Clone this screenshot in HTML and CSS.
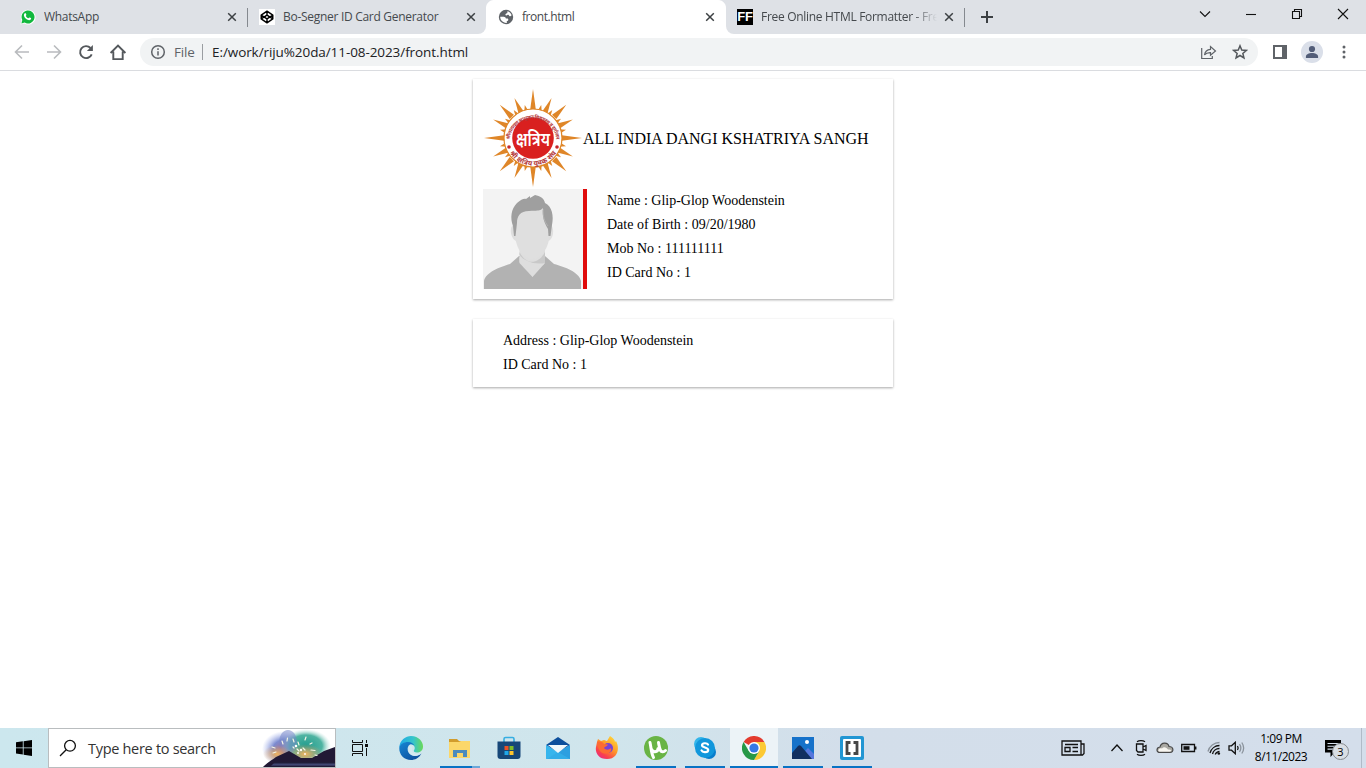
FILE: index.html
```html
<!DOCTYPE html>
<html lang="en">
<head>
<meta charset="utf-8">
<title>front.html</title>
<link rel="stylesheet" href="styles.css">
</head>
<body>
<div class="desktop">
  <header class="tabstrip">
    <div class="tab tab-first">
      <svg class="favicon" viewBox="0 0 16 16"><path d="M.4 15.500l1.200-4A7.400 7.400 0 1 1 4.400 14.500z" fill="#fff"/><path d="M1.400 14.400l.9-3.300A6.500 6.500 0 1 1 4.700 13.600z" fill="#12b83e"/><path d="M4.600 4.500c.5-.6 1-.5 1.300.2l.5 1.100c.1.400-.4.800-.6 1.100.6 1.200 1.500 1.900 2.700 2.400.4-.3.700-1 1.100-.9l1.400.7c.3.300 0 1.300-.5 1.700-1.200.9-2.900.2-4.200-.8C5 9 3.800 7.400 3.900 6c0-.6.300-1.100.7-1.500z" fill="#fff"/></svg>
      <span class="tab-title t-whatsapp">WhatsApp</span>
      <svg class="close" viewBox="0 0 10 10"><path d="M1.200 1.200l7.600 7.600M8.800 1.200l-7.600 7.600"/></svg>
    </div>
    <div class="tab tab-second">
      <svg class="favicon" viewBox="0 0 16 16"><rect width="16" height="16" fill="#fff"/><path d="M8 2.200l5.800 3.900v3.800L8 13.800 2.200 9.900V6.100zM8 2.200v3.900M8 9.900v3.900M2.200 6.100L8 9.900l5.800-3.800M2.200 9.900L8 6.100l5.800 3.800" fill="none" stroke="#000" stroke-width="1.400" stroke-linejoin="round"/></svg>
      <span class="tab-title t-segner">Bo-Segner ID Card Generator</span>
      <svg class="close" viewBox="0 0 10 10"><path d="M1.200 1.200l7.600 7.600M8.800 1.200l-7.600 7.600"/></svg>
    </div>
    <div class="tab tab-active">
      <svg class="favicon" viewBox="0 0 16 16"><circle cx="8" cy="8" r="7.200" fill="#5f6368"/><path d="M9.500 2.300c2 .5 3.600 1.900 4.100 4-.8 1.300-1.700 1.100-2.300.6-.5-.4-.2-1-1-1.100-.9 0-1.200.8-2.100.7-.8-.1-1-.9-.5-1.500.6-.6 1.300-.3 1.600-.9.200-.5-.2-1.100.2-1.800zM2.200 7.700h3.500c1.300 0 2.200.8 2.200 1.900h1.200c.8 0 1.200.5 1.200 1.100 0 .8-.7 1.200-1.500 1.300v1.900C5.200 14.200 2.100 11.400 2.200 7.700z" fill="#fff"/></svg>
      <span class="tab-title t-front">front.html</span>
      <svg class="close" viewBox="0 0 10 10"><path d="M1.200 1.200l7.600 7.600M8.800 1.200l-7.600 7.600"/></svg>
    </div>
    <div class="tab tab-last">
      <span class="favicon ff">FF</span>
      <span class="tab-title t-format">Free Online HTML Formatter - Fre</span>
      <svg class="close" viewBox="0 0 10 10"><path d="M1.200 1.200l7.600 7.600M8.800 1.200l-7.600 7.600"/></svg>
    </div>
    <svg class="newtab" viewBox="0 0 12 12"><path d="M6 0v12M0 6h12"/></svg>
    <div class="window-buttons">
      <svg viewBox="0 0 12 12"><path d="M1 3.500l5 5 5-5" /></svg>
      <svg viewBox="0 0 12 12"><path d="M1 6.500h10"/></svg>
      <svg viewBox="0 0 12 12"><path d="M1.500 3.500h7v7h-7zM3.500 3.500v-2h7v7h-2"/></svg>
      <svg viewBox="0 0 12 12"><path d="M1 1l10 10M11 1L1 11"/></svg>
    </div>
  </header>

  <nav class="toolbar">
    <div class="nav-buttons">
      <svg class="dim" viewBox="0 0 18 18"><path d="M16 9H2.500M9 2.500L2.500 9 9 15.500"/></svg>
      <svg class="dim" viewBox="0 0 18 18"><path d="M2 9h13.500M9 2.500L15.500 9 9 15.500"/></svg>
      <svg viewBox="0 0 18 18"><path d="M14.700 11.300A6 6 0 1 1 13.500 5" /><path d="M15.900 2v6h-6z" class="solid"/></svg>
      <svg viewBox="0 0 18 18"><path d="M1.600 10L9 2.500l7.400 7.500M4.300 8.500v7.600h9.400V8.500"/></svg>
    </div>
    <div class="omnibox">
      <svg class="info" viewBox="0 0 16 16"><circle cx="8" cy="8" r="6.300"/><path d="M8 7.200v4.200M8 4.300v1.700"/></svg>
      <span class="scheme">File</span>
      <span class="url">E:/work/riju%20da/11-08-2023/front.html</span>
      <svg class="share" viewBox="0 0 18 16"><path d="M1.700 4v10.500h10.600V12M4.500 11C5 7.500 7 5.500 10.500 5.300V2.500L15.500 7l-5 4.300V8.600C8 8.500 6 9 4.500 11z"/></svg>
      <svg class="star" viewBox="0 0 16 16"><path d="M8 1.800l1.750 4.250 4.600.35-3.500 3 1.100 4.500L8 11.500l-3.950 2.400 1.100-4.500-3.500-3 4.600-.35z"/></svg>
    </div>
    <svg class="panel" viewBox="0 0 14 14"><path d="M1 1h12v12H1z" fill="#fff" stroke="#5f6368" stroke-width="2"/><path d="M9 1h4v12H9z" fill="#5f6368"/></svg>
    <svg class="avatar" viewBox="0 0 22 22"><circle cx="11" cy="11" r="11" fill="#dadfe9"/><circle cx="11" cy="8" r="3.100" fill="#525d78"/><path d="M4.900 17v-1.300c0-2.200 3-3.600 6.100-3.600s6.100 1.400 6.100 3.600V17z" fill="#525d78"/></svg>
    <svg class="dots" viewBox="0 0 4 14"><circle cx="2" cy="2" r="1.500"/><circle cx="2" cy="7" r="1.500"/><circle cx="2" cy="12" r="1.500"/></svg>
  </nav>

  <main class="page">
    <section class="card">
      <div class="card-head">
        <svg class="logo" viewBox="0 1 100 100">
          <defs>
            <path id="ray" d="M50 1L53 23h-6z"/>
            <path id="ray-mid" d="M50 6L53 23h-6z"/>
            <path id="ray-short" d="M50 16L52.300 23h-4.600z"/>
            <g id="quarter">
              <use href="#ray"/>
              <use href="#ray-short" transform="rotate(14 50 50)"/>
              <use href="#ray-mid" transform="rotate(25 50 50)"/>
              <use href="#ray-short" transform="rotate(34.500 50 50)"/>
              <use href="#ray-mid" transform="rotate(45 50 50) translate(0 -3)"/>
              <use href="#ray-short" transform="rotate(55.500 50 50)"/>
              <use href="#ray-mid" transform="rotate(65 50 50)"/>
              <use href="#ray-short" transform="rotate(76 50 50)"/>
            </g>
            <path id="arc-top" d="M26.700 52A23.400 23.400 0 0 1 73.300 52"/>
            <path id="arc-bottom" d="M22.500 55A28 28 0 0 0 77.500 55"/>
          </defs>
          <g fill="#df8628">
            <use href="#quarter"/><use href="#quarter" transform="rotate(90 50 50)"/>
            <use href="#quarter" transform="rotate(180 50 50)"/><use href="#quarter" transform="rotate(270 50 50)"/>
          </g>
          <circle cx="50" cy="50" r="29" fill="#fff" stroke="#df8628" stroke-width="1.200"/>
          <circle cx="50" cy="50" r="20.800" fill="#d9201f"/>
          <circle cx="26" cy="59" r="1.800" fill="#c5262a"/><circle cx="74" cy="59" r="1.800" fill="#c5262a"/>
          <text class="ring-text"><textPath href="#arc-top" textLength="68">श्रीनारायण साधुजन विद्यालय व दुर्गाजन</textPath></text>
          <text class="ring-text ring-bottom"><textPath href="#arc-bottom" startOffset="11" textLength="55">श्री क्षत्रिय युवक संघ</textPath></text>
          <g transform="translate(50 57.500) scale(1 1.300)"><text class="logo-word" text-anchor="middle" textLength="34" lengthAdjust="spacingAndGlyphs">क्षत्रिय</text></g>
        </svg>
        <span class="org">ALL INDIA DANGI KSHATRIYA SANGH</span>
      </div>
      <div class="card-body">
        <svg class="photo" viewBox="0 0 100 100">
          <rect width="100" height="100" fill="#f3f3f3"/>
          <path d="M1 100V92C3 83 17 78 27 75L36 67H62L71 75C82 78 96 83 98 92V100z" fill="#b2b2b2"/>
          <path d="M36.500 56V74L49.500 88 62 74V56z" fill="#dedede"/>
          <path d="M36.500 63C43 76 55 76 62 63V74C51 76 41 72 36.500 66z" fill="#c9c9c9"/>
          <path d="M36.500 73C41 79 47 78 49.500 88 51 79 59 78 62 74L61 75C52 76 44 74 36.500 68z" fill="#dedede"/>
          <path d="M31 36C26 36 27 51 34 52zM67 36C72 37 71 51 65 52z" fill="#dedede"/>
          <path d="M32 24C36 17 62 16 66 27L66.500 48C65 58 60 69 49 70 38 69 33 57 32 47z" fill="#dfdfdf"/>
          <path d="M31 47L30 37C27 29 28 20 34 14 38 10 42 9 43 10L47 7 47 9 52 6C57 7 61 9 62 14 69 17 71 27 69 36L67.500 47H65.500L65 40C61 33 59 28 60 19 57 23 52 21 46 22 37 22 34 27 34 34L32.500 47z" fill="#9f9f9f"/>
          <path d="M60 20C60 27 61 32 65 37" fill="none" stroke="#b8b8b8" stroke-width=".8"/>
        </svg>
        <div class="details front">
          <div>Name : Glip-Glop Woodenstein</div>
          <div>Date of Birth : 09/20/1980</div>
          <div>Mob No : 111111111</div>
          <div>ID Card No : 1</div>
        </div>
      </div>
    </section>
    <section class="card">
      <div class="details">
        <div>Address : Glip-Glop Woodenstein</div>
        <div>ID Card No : 1</div>
      </div>
    </section>
  </main>

  <footer class="taskbar">
    <div class="start"><svg viewBox="0 0 16 16"><path d="M0 2.300l6.800-1v6.200H0zM7.600 1.200L16 0v7.500H7.600zM0 8.300h6.800v6.300L0 13.600zM7.600 8.300H16V16l-8.400-1.200z"/></svg></div>
    <div class="search">
      <svg class="lens" viewBox="0 0 18 18"><circle cx="11" cy="6.800" r="5.400"/><path d="M7.200 10.800L1 17"/></svg>
      <span>Type here to search</span>
      <svg class="fireworks" viewBox="0 0 73 38">
        <defs>
          <radialGradient id="sky1"><stop offset="0" stop-color="#a76d93"/><stop offset=".5" stop-color="#7b8bd0"/><stop offset="1" stop-color="#aab8f0" stop-opacity="0"/></radialGradient>
          <radialGradient id="sky2"><stop offset="0" stop-color="#239d8f"/><stop offset=".65" stop-color="#4fb4a2"/><stop offset="1" stop-color="#bfe5df" stop-opacity="0"/></radialGradient>
          <radialGradient id="glow"><stop offset="0" stop-color="#f2b45d"/><stop offset="1" stop-color="#d89a60" stop-opacity="0"/></radialGradient>
          <linearGradient id="lake" x2="0" y2="1"><stop offset="0" stop-color="#17132a"/><stop offset=".55" stop-color="#454b7a"/><stop offset="1" stop-color="#130e25"/></linearGradient>
        </defs>
        <ellipse cx="22" cy="20" rx="22" ry="18" fill="url(#sky1)"/>
        <ellipse cx="44" cy="17" rx="25" ry="17" fill="url(#sky2)"/>
        <ellipse cx="26" cy="13" rx="9" ry="12" fill="#7687c8" opacity=".55"/>
        <ellipse cx="15" cy="25" rx="14" ry="9" fill="url(#glow)"/>
        <ellipse cx="43" cy="25" rx="18" ry="10" fill="url(#glow)"/>
        <path d="M1 38C6 33 10 31 14 28L27 22 39 29 50 29 62 22 73 18V38z" fill="#211935"/>
        <path d="M13 33H73V38H8z" fill="url(#lake)"/>
        <path d="M21 15l-1-3M13 19l-3-1M14 23l-3 1M25 12l.5-3M32 13l-1-3M37 16l-1-3M43 11l1-3M48 15l2-1M49 21l4 .5M31 18l1 1M35 20l2 2M41 19l2 2M53 26l2 .5" stroke="#f4f4e5" stroke-width="1.200" stroke-linecap="round"/>
        <circle cx="34" cy="17" r="1.300" fill="#fff"/><circle cx="39" cy="21" r="1.200" fill="#fff"/><circle cx="36" cy="24" r=".9" fill="#fff"/><circle cx="43" cy="25" r=".9" fill="#fff"/>
      </svg>
    </div>
    <div class="taskview"><svg viewBox="0 0 17 16"><path d="M.5 0v2.500h10V0M.5 16v-2.500h10V16M.5 4.500h10v7H.5zM14.500 0v3M14.500 8v8"/><path class="knob" d="M13 4h3v3h-3z"/></svg></div>
    <div class="apps">
      <div class="app"><svg viewBox="0 0 24 24"><defs><linearGradient id="edge-a" x1="0" x2="1"><stop offset="0" stop-color="#1fa9e6"/><stop offset=".6" stop-color="#36c5c9"/><stop offset="1" stop-color="#6bd957"/></linearGradient><linearGradient id="edge-b" x2=".8" y2="1"><stop stop-color="#1686d4"/><stop offset="1" stop-color="#0d4d9b"/></linearGradient></defs><path d="M.3 12C.3 4 7 0 12 0c8 0 12 6 12 10.500 0 4-3 6-6 6-2.500 0-4-1-3-2.200 2-2.500 0-6.300-4-6.300C6 8 1 10 .3 12z" fill="url(#edge-a)"/><path d="M.3 12C1 8 5 6 9 6c3 0 5.500 1.500 6.500 4-1-1.300-3-2-4.500-1.500-4 2-3 10 3 11.300 3 .6 6-.5 8.500-2.300C20 22 16 24 12 24 5 24 0 18.500.3 12z" fill="url(#edge-b)"/><path d="M11 10c-2.500 3-1.500 8.500 3.500 9.700 3 .6 5.500-.5 8-2.200-1.500 1-7 1.500-9-1.500-1.300-2 .2-3.500-.2-5-.3-1-1.300-1.500-2.300-1z" fill="#d4eaf1"/></svg></div>
      <div class="app running stacked"><svg viewBox="0 0 24 24"><path d="M1 3h8l2 2h11v3H1z" fill="#d19c2c"/><path d="M1 6h10l2-1h9v17H1z" fill="#fbd76a"/><path d="M5 21v-7h14v7h-4v-4H9v4z" fill="#4b8bbd"/></svg></div>
      <div class="app"><svg viewBox="0 0 24 24"><path d="M7 6V3c0-1 .5-1.500 1.500-1.500h7c1 0 1.500.5 1.500 1.500v3" fill="none" stroke="#36aee2" stroke-width="1.600"/><path d="M.5 5.500h23V20c0 2-1 3-3 3h-17c-2 0-3-1-3-3z" fill="#174778"/><path d="M7.500 10h4v4h-4z" fill="#ed5225"/><path d="M12.500 10h4v4h-4z" fill="#80bd27"/><path d="M7.500 15h4v4h-4z" fill="#20a7e9"/><path d="M12.500 15h4v4h-4z" fill="#ffc52d"/></svg></div>
      <div class="app"><svg viewBox="0 0 24 24"><path d="M0 9L12 1l12 8-12 8z" fill="#0d4f9c"/><path d="M0 9l12 8-12 6z" fill="#38b6ed"/><path d="M24 9L0 23h24z" fill="#2c9fe0"/><path d="M0 9l24 14H0z" fill="#36b6ed" opacity=".65"/><path d="M2 9h20l-10 8z" fill="#f1f8fb"/></svg></div>
      <div class="app"><svg viewBox="0 0 24 24"><defs><linearGradient id="fox" x1=".9" y1="0" x2=".2" y2="1"><stop stop-color="#ffe03b"/><stop offset=".45" stop-color="#ff9b28"/><stop offset=".8" stop-color="#fa3f4e"/><stop offset="1" stop-color="#e52b89"/></linearGradient></defs><path d="M2 6l1-3 3 2 3-1 3 1 3-5c3 2 5 4 5 6l1-1c4 7 2 18-9 18C3 23 0 16 1 11z" fill="url(#fox)"/><circle cx="13" cy="12" r="5" fill="#7943d5"/><path d="M2 6c3-1 6 0 7 2l4 .5c-1 2-3 2-4 3.500 2 2.500 5 2 7 0 2 5-7 8-11 3-2-3-3-6-3-9z" fill="#fd6b32"/></svg></div>
      <div class="app running"><svg viewBox="0 0 24 24"><circle cx="12" cy="12" r="12" fill="#69b445"/><path d="M6 6.500C7.300 12 7 17 9.500 21.500M7 12.500C8.500 17 14 16.500 14 12.500M14.500 6.500C15 9 15 11 16.500 14.500 17.500 16.500 20 16 21.500 14.500" fill="none" stroke="#fff" stroke-width="3" stroke-linecap="round"/></svg></div>
      <div class="app running"><svg viewBox="0 0 24 24"><circle cx="8" cy="8" r="7" fill="#33b5ea"/><circle cx="16" cy="16" r="7" fill="#087dcc"/><circle cx="12" cy="12" r="10" fill="#1197dc"/><path d="M15 8.500c-1-1.800-6-1.800-6 .8 0 2.700 6.200 1.600 6.200 4.600 0 2.800-5.700 2.900-6.700.5" fill="none" stroke="#fff" stroke-width="2.200" stroke-linecap="round"/></svg></div>
      <div class="app running current"><svg viewBox="0 0 24 24"><path d="M12 12L1.600 6A12 12 0 0 1 22.400 6z" fill="#e33b2e"/><path d="M12 12V6h10.400A12 12 0 0 1 12 24l5.200-9z" fill="#fcc934"/><path d="M1.600 6L6.800 15 12 18l5.200-3L12 24A12 12 0 0 1 1.600 6z" fill="#279847"/><path d="M1.600 6h20.800H12z" fill="#e33b2e"/><circle cx="12" cy="12" r="6" fill="#fff"/><circle cx="12" cy="12" r="4.600" fill="#3578e5"/></svg></div>
      <div class="app running"><svg viewBox="0 0 24 24"><path d="M1 1h22v22H1z" fill="#1672ca"/><path d="M12 23V17l5-5 6 6v5z" fill="#5677dd"/><path d="M1 17l6-7c1-1 2-1 3 0l11 13H1z" fill="#122f60"/><circle cx="16" cy="6" r="2" fill="#fff"/></svg></div>
      <div class="app running"><svg viewBox="0 0 24 24"><rect width="24" height="24" rx="2" fill="#2296d3"/><rect x="3" y="3" width="18" height="18" rx="1" fill="#fff"/><path d="M10.500 6.500H7v11h3.500M13.500 6.500H17v11h-3.500" fill="none" stroke="#474747" stroke-width="2.800"/></svg></div>
    </div>
    <div class="tray">
      <svg class="news" viewBox="0 0 24 16"><path d="M1 1h19v14H1zM20 4h3v9.500L21.500 15H19M4 7.500h5v4H4zM4 4.500h13M11.500 7.500H17M11.500 11.500H17"/></svg>
      <svg class="chevron" viewBox="0 0 14 10"><path d="M1.500 8L7 2l5.500 6"/></svg>
      <svg class="meet" viewBox="0 0 12 16"><path d="M2 1.800c2-1.500 6-1.500 8 0M2 14.200c2 1.500 6 1.500 8 0M1.500 4h6.500v8H3L1.500 10.500zM8 7l3-1.500v5L8 9"/></svg>
      <svg class="cloud" viewBox="0 0 18 12"><path d="M4 10.500C0 10.500 0 5.500 4 5 5 0 12 0 13 4.500c5 0 5 6 1 6z" fill="#aaa9a3" stroke="#484848" stroke-width="1.200"/><path d="M3 9.500C1 8 4 5.500 6 6.500 8 4 11 6 12 7.500c3-.5 4 1 2 2z" fill="#f8f6f1" stroke="none"/></svg>
      <svg class="battery" viewBox="0 0 16 10"><path d="M.7 1.500h12.800v7H.7zM14.800 3.500v3"/><path class="knob" d="M2.500 3.200h6v3.600h-6z"/></svg>
      <svg class="wifi" viewBox="0 0 14 14"><path class="faint" d="M1 10.500A12 12 0 0 1 12.500 1.500"/><path d="M3 12A10 10 0 0 1 12.500 4.500M5.500 13A7 7 0 0 1 12.500 7.500M8.200 13.500Q9 11 12.500 10.300"/><circle cx="11.800" cy="12.500" r="1.300"/></svg>
      <svg class="sound" viewBox="0 0 17 14"><path d="M1 4.800h2.500L7.300 1.300v11.400L3.500 9.200H1z"/><path d="M9.500 5q1.300 2 0 4" /><path class="faint" d="M11.500 3.200q2.700 3.800 0 7.600M13.800 1.500q3.700 5.500 0 11"/></svg>
      <div class="clock"><span class="time">1:09 PM</span><span class="date">8/11/2023</span></div>
      <div class="notice">
        <svg viewBox="0 0 17 17"><path d="M0 0h16v12.500H9.500L5.500 17v-4.500H0z"/><path d="M2.500 3.500h11M2.500 6.300h11M2.500 9.100h7" stroke="#d4deeb" stroke-width="1.100"/></svg>
        <span class="badge">3</span>
      </div>
    </div>
  </footer>
</div>
</body>
</html>
```
FILE: styles.css
```css
* { box-sizing: border-box; }
body { margin: 0; font-family: "Open Sans", "Noto Sans", sans-serif; color: #000; }
svg { display: block; flex: none; }
.desktop { width: 1366px; height: 768px; display: flex; flex-direction: column; background: #fff; overflow: hidden; }

/* Browser tabs */
.tabstrip { height: 34px; flex: none; display: flex; background: linear-gradient(#fff, #fff) 470px 0 / 270px 34px no-repeat #dee1e6; }
.tab { display: flex; align-items: center; height: 34px; width: 239px; padding: 0 10px 0 11px; background: #dee1e6; }
.tab-first { width: 248px; padding-left: 20px; padding-right: 11px; }
.tab-first, .tab-last { background: linear-gradient(#85898f, #85898f) right 0 top 8px / 1px 19px no-repeat #dee1e6; }
.tab-second { width: 238px; border-radius: 0 0 8px 0; }
.tab-active { width: 240px; padding-left: 12px; padding-right: 11px; background: radial-gradient(circle at 8px 8px, #fff 7.5px, #dee1e6 8.500px) 0 0 / 8px 8px no-repeat, radial-gradient(circle at 0 8px, #fff 7.500px, #dee1e6 8.500px) 100% 0 / 8px 8px no-repeat, #fff; }
.tab-last { border-radius: 0 0 0 8px; }
.favicon { width: 16px; height: 16px; flex: none; }
.ff { background: #000; color: #fff; font: bold 13px/16px "Liberation Sans", sans-serif; text-align: center; letter-spacing: -.3px; }
.tab-title { font-size: 12px; line-height: 16px; color: #45494d; margin: 0 8px; flex: 1; white-space: nowrap; overflow: hidden; }
.t-whatsapp { letter-spacing: -.3px; }
.t-segner { letter-spacing: -.29px; }
.t-front { letter-spacing: -.45px; }
.t-format { flex: none; width: 178px; margin-right: 5px; letter-spacing: -.3px; -webkit-mask-image: linear-gradient(90deg, #000 152px, transparent 176px); mask-image: linear-gradient(90deg, #000 152px, transparent 176px); }
.close { width: 10px; height: 10px; fill: none; stroke: #3c4043; stroke-width: 1.500; }
.newtab { width: 12px; height: 12px; margin: 11px 0 0 16px; fill: none; stroke: #3c4043; stroke-width: 2; }
.window-buttons { margin: 8px 17px 0 auto; display: flex; gap: 34px; }
.window-buttons svg { width: 12px; height: 12px; fill: none; stroke: #111; stroke-width: 1.100; }

/* Address bar */
.toolbar { height: 37px; flex: none; display: flex; align-items: center; background: #fff; border-bottom: 1px solid #dadce0; padding-left: 13px; }
.nav-buttons { display: flex; gap: 14px; width: 127px; }
.nav-buttons svg { width: 18px; height: 18px; fill: none; stroke: #54585c; stroke-width: 1.900; }
.nav-buttons .dim { stroke: #b9bbbe; stroke-width: 1.600; }
.nav-buttons .solid { fill: #54585c; stroke: none; }
.omnibox { width: 1118px; height: 28px; border-radius: 14px; background: #f1f3f4; display: flex; align-items: center; padding: 0 10px; }
.info { width: 16px; height: 16px; fill: none; stroke: #5f6368; stroke-width: 1.500; }
.scheme { width: 29px; margin-left: 8px; border-right: 1px solid #9a9da1; font-size: 13.500px; line-height: 16px; color: #5f6368; letter-spacing: -.2px; }
.url { margin-left: 9px; font-size: 13.500px; line-height: 18px; color: #202124; letter-spacing: -.08px; flex: 1; white-space: nowrap; }
.share { width: 18px; height: 16px; margin-right: 14px; fill: none; stroke: #5f6368; stroke-width: 1.200; }
.star { width: 16px; height: 16px; fill: none; stroke: #54585c; stroke-width: 1.500; }
.panel { width: 14px; height: 14px; margin-left: 15px; }
.avatar { width: 22px; height: 22px; margin-left: 14px; }
.dots { width: 4px; height: 14px; margin-left: 19px; fill: #5f6368; }

/* ID card page */
.page { flex: 1; padding-top: 8px; display: flex; flex-direction: column; align-items: center; gap: 20px; font-family: "Liberation Serif", serif; }
.card { width: 420px; padding: 10px; background: #fff; box-shadow: 0 1px 3px rgba(0,0,0,.12), 0 1px 2px rgba(0,0,0,.24); }
.card-head { display: flex; align-items: center; height: 100px; }
.logo { width: 100px; height: 100px; }
.logo-word { font: 600 15px "Noto Sans Devanagari", "Noto Sans", sans-serif; fill: #fff; }
.ring-text { font: bold 5.200px "Noto Sans Devanagari", "Noto Sans", sans-serif; fill: #b4383a; }
.ring-bottom { font-size: 7px; }
.org { font-size: 16px; white-space: nowrap; }
.card-body { display: flex; height: 100px; }
.photo { width: 100px; height: 100px; }
.details { padding-left: 20px; font-size: 14px; line-height: 24px; }
.front { border-left: 4px solid #e00b0b; }

/* Taskbar */
.taskbar { height: 40px; flex: none; display: flex; background: linear-gradient(90deg, #cce7ee, #d0e5ec 45%, #d3deea 62%, #d4deeb); }
.start { width: 48px; padding: 12px 0 0 16px; }
.start svg { width: 16px; height: 16px; }
.search { width: 288px; height: 40px; border: 1px solid #b9bdbf; background: #fff; display: flex; align-items: center; font-size: 14.500px; color: #333; letter-spacing: -.3px; padding-left: 10px; }
.search span { margin-left: 11px; flex: 1; white-space: nowrap; }
.lens { width: 18px; height: 18px; fill: none; stroke: #111; stroke-width: 1.300; }
.fireworks { width: 73px; height: 38px; }
.taskview { width: 51px; padding: 12px 0 0 16px; }
.taskview svg { width: 17px; height: 16px; fill: none; stroke: #111; stroke-width: 1; }
.knob { fill: #111; stroke: none; }
.apps { display: flex; gap: 1px; }
.app { width: 48px; height: 40px; padding: 8px 12px 0; }
.app svg { width: 24px; height: 24px; }
.running { background: linear-gradient(#0872c4, #0872c4) center bottom / 40px 2px no-repeat; }
.stacked { background: linear-gradient(90deg, #0872c4 32px, #6ca8d9 32px) center bottom / 40px 2px no-repeat; }
.current { background: linear-gradient(#0872c4, #0872c4) center bottom / 48px 2px no-repeat #ecf3f7; }
.tray { margin-left: auto; width: 305px; height: 40px; display: flex; align-items: center; background: linear-gradient(#b0bbc8, #b0bbc8) 300px 0 / 1px 40px no-repeat; }
.tray > svg { fill: none; stroke: #111; stroke-width: 1.300; }
.news { width: 24px; height: 16px; }
.chevron { width: 14px; height: 10px; margin-left: 25px; }
.meet { width: 12px; height: 16px; margin-left: 11px; }
.cloud { width: 18px; height: 12px; margin-left: 9px; }
.battery { width: 16px; height: 10px; margin-left: 7px; }
.wifi { width: 14px; height: 14px; margin-left: 10px; }
.wifi circle { fill: #111; stroke: none; }
.sound { width: 17px; height: 14px; margin-left: 7px; }
.faint { stroke: #8b939c; }
.clock { width: 64px; margin-left: 4px; display: flex; flex-direction: column; align-items: center; font-size: 12px; line-height: 18px; white-space: nowrap; }
.time { letter-spacing: -.45px; }
.date { letter-spacing: -.5px; }
.notice { position: relative; margin-left: 12px; width: 24px; height: 24px; padding-top: 4px; }
.notice svg { width: 17px; height: 17px; }
.badge { position: absolute; left: 7px; top: 7px; width: 17px; height: 17px; border: 1px solid #85898e; border-radius: 50%; background: #d9dee4; font-size: 11px; line-height: 15px; text-align: center; }
```
